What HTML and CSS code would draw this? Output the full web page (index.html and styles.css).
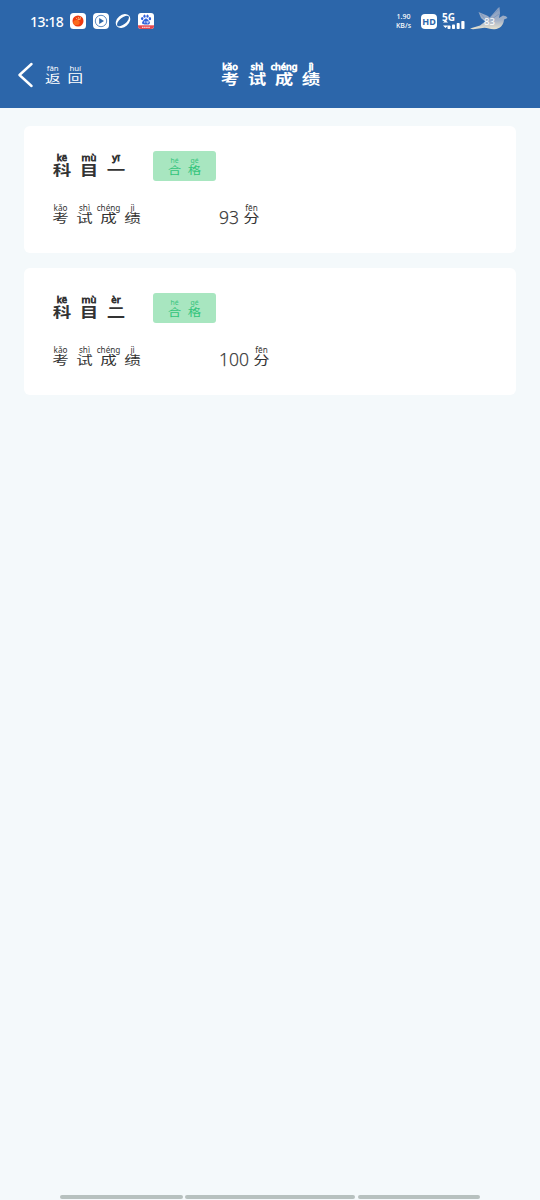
FILE: index.html
```html
<!DOCTYPE html>
<html lang="zh-CN">
<head>
<meta charset="utf-8">
<title>考试成绩</title>
<link rel="stylesheet" href="styles.css">
</head>
<body>
<header class="header">
  <div class="status">
    <span class="clock">13:18</span>
    <svg class="app" viewBox="0 0 16 16"><rect width="16" height="16" rx="3.5" fill="#fff"/><circle cx="8" cy="8" r="5.500" fill="#ee3a10"/><ellipse cx="6.500" cy="9.500" rx="3.200" ry="2.600" fill="#fb6a1c"/><path d="M6.200 4.800l.8 1.200M8.300 4l.3 1.600M10.500 4.200l-.5 1.700M7.500 6.800l3-.6" stroke="#ffd28a" stroke-width=".8"/></svg>
    <svg class="app" viewBox="0 0 16 16"><rect width="16" height="16" rx="4" fill="#fff"/><circle cx="8" cy="8" r="5.7" fill="none" stroke="#4b7dba" stroke-width=".9"/><path d="M6.2 5v6l4.8-3z" fill="#2d66aa"/></svg>
    <svg class="app" viewBox="0 0 16 16"><g transform="rotate(-40 8 8)"><ellipse cx="8" cy="8" rx="8" ry="6" fill="#fff"/><ellipse cx="8" cy="8" rx="7.300" ry="3.300" fill="#2c66aa"/></g></svg>
    <svg class="app" viewBox="0 0 16 16"><defs><clipPath id="tile"><rect width="16" height="16" rx="3"/></clipPath></defs><g clip-path="url(#tile)"><rect width="16" height="16" fill="#fff"/><g fill="#3162dc"><ellipse cx="4.200" cy="5.600" rx="1.200" ry="1.600"/><ellipse cx="6.500" cy="3.200" rx="1.100" ry="1.600"/><ellipse cx="9.500" cy="3.200" rx="1.100" ry="1.600"/><ellipse cx="11.900" cy="5.700" rx="1.200" ry="1.600"/><path d="M8 5.600c1.500 0 2 1.600 3.200 2.700 1.500 1.500.5 3.300-1.400 3.200H6.200c-2 0-2.800-1.800-1.400-3.200C6 7.200 6.500 5.600 8 5.600z"/></g><path d="M6.800 8v2.200M9 8v2h1.100V8" fill="none" stroke="#fff" stroke-width=".7"/><rect y="12.300" width="16" height="3.700" fill="#e5484f"/><path d="M4 14.200h8" stroke="#fff" stroke-width="1.100" stroke-dasharray="1.500 .6"/></g></svg>
    <span class="speed"><span>1.90</span><span>KB/s</span></span>
    <span class="hd">HD</span>
    <span class="signal"><span class="net">5G</span>
      <svg class="bars" viewBox="0 0 24 10"><path d="M1 2.500h5L3.500 0zM1 5.500h5L3.500 8z" fill="#fff"/><g fill="#fff"><rect x="5.500" y="5.500" width="3" height="3.500" rx=".8"/><rect x="10" y="4.500" width="3" height="4.500" rx=".8"/><rect x="14.700" y="3" width="3" height="6" rx=".8"/><rect x="19.300" y="1" width="3.200" height="8" rx=".8"/></g></svg>
    </span>
    <span class="battery">
      <svg viewBox="0 0 38 26"><defs><linearGradient id="dove" x1="0" y1="0" x2="0" y2="1"><stop offset="0" stop-color="#8099bf"/><stop offset=".6" stop-color="#a4b2c8"/><stop offset="1" stop-color="#e8e3cf"/></linearGradient></defs><path d="M0 22.500l10-3 5-4-4-3.500-2.500-6 8.500 3.500 3 2L28 2l1.500-1 .5 6-1 5 4-2.500 3 .8 1.500 1.700-3.500 1.500c0 5-4 9.500-9.500 9.800-4 .2-7-1.300-10-1.500L3 23.300z" fill="url(#dove)"/><path d="M19 12l9-8M15 13l-4-5M22 13l7-5" stroke="#6488bb" stroke-width=".5"/></svg>
      <span class="level">83</span>
    </span>
  </div>
  <nav class="nav">
    <a class="back">
      <svg class="chevron" viewBox="0 0 16 26"><path d="M13.500 2L1.500 13l12 11" fill="none" stroke="#fff" stroke-width="2.400" stroke-linecap="round" stroke-linejoin="round"/></svg>
      <span class="py py-back"><span class="zi"><i>fǎn</i><b>返</b></span><span class="zi"><i>huí</i><b>回</b></span></span>
    </a>
    <h1 class="py py-title"><span class="zi"><i>kǎo</i><b>考</b></span><span class="zi"><i>shì</i><b>试</b></span><span class="zi"><i>chéng</i><b>成</b></span><span class="zi"><i>jì</i><b>绩</b></span></h1>
  </nav>
</header>
<main class="list">
  <section class="card">
    <div class="card-head">
      <h2 class="py py-subject"><span class="zi"><i>kē</i><b>科</b></span><span class="zi"><i>mù</i><b>目</b></span><span class="zi"><i>yī</i><b>一</b></span></h2>
      <span class="badge py py-badge"><span class="zi"><i>hé</i><b>合</b></span><span class="zi"><i>gé</i><b>格</b></span></span>
    </div>
    <div class="row">
      <span class="label py py-text"><span class="zi"><i>kǎo</i><b>考</b></span><span class="zi"><i>shì</i><b>试</b></span><span class="zi"><i>chéng</i><b>成</b></span><span class="zi"><i>jì</i><b>绩</b></span></span>
      <span class="score">93</span>
      <span class="py py-text"><span class="zi"><i>fēn</i><b>分</b></span></span>
    </div>
  </section>
  <section class="card">
    <div class="card-head">
      <h2 class="py py-subject"><span class="zi"><i>kē</i><b>科</b></span><span class="zi"><i>mù</i><b>目</b></span><span class="zi"><i>èr</i><b>二</b></span></h2>
      <span class="badge py py-badge"><span class="zi"><i>hé</i><b>合</b></span><span class="zi"><i>gé</i><b>格</b></span></span>
    </div>
    <div class="row">
      <span class="label py py-text"><span class="zi"><i>kǎo</i><b>考</b></span><span class="zi"><i>shì</i><b>试</b></span><span class="zi"><i>chéng</i><b>成</b></span><span class="zi"><i>jì</i><b>绩</b></span></span>
      <span class="score">100</span>
      <span class="py py-text"><span class="zi"><i>fēn</i><b>分</b></span></span>
    </div>
  </section>
</main>
<footer class="gesture"><span></span><span class="mid"></span><span></span></footer>
</body>
</html>
```
FILE: styles.css
```css
* { box-sizing: border-box; }
body {
  margin: 0;
  height: 1200px;
  display: flex;
  flex-direction: column;
  overflow: hidden;
  background: #f4f9fb;
  color: #333;
  font-family: "Noto Sans", "Noto Sans CJK SC", sans-serif;
}
h1, h2 { margin: 0; }

/* annotated characters: pinyin over a flattened hanzi */
.py { display: flex; }
.zi {
  display: flex;
  flex-direction: column;
  align-items: center;
  width: var(--pitch);
}
.zi i {
  font-style: normal;
  font-size: var(--pin);
  line-height: var(--pin-h);
  height: var(--pin-h);
  white-space: nowrap;
}
.zi b {
  font-family: "Noto Sans CJK SC", sans-serif;
  font-weight: inherit;
  font-size: var(--han);
  line-height: var(--han-h);
  height: var(--han-h);
  transform: scaleY(.76);
}
.py-back { --pitch: 22.5px; --pin: 7.800px; --pin-h: 7px; --han: 15.500px; --han-h: 13px; font-weight: 400; }
.py-title, .py-subject { --pitch: 27px; --pin: 9.500px; --pin-h: 8px; --han: 18.500px; --han-h: 15px; font-weight: 700; }
.py-title i, .py-subject i { font-weight: 400; -webkit-text-stroke: .8px currentColor; }
.py-title { --pin: 9.200px; --han-h: 14px; }
.py-text { --pitch: 24px; --pin: 8.200px; --pin-h: 8px; --han: 16.500px; --han-h: 13px; }
.py-text b { transform: scaleY(.74); }
.py-badge { --pitch: 20px; --pin: 6.800px; --pin-h: 7px; --han: 13.500px; --han-h: 10px; }

.header { height: 108px; background: #2c66aa; color: #fff; }
.status { display: flex; align-items: center; height: 42px; padding-left: 30px; }
.clock { width: 40px; font-size: 14px; font-weight: 500; letter-spacing: -.5px; }
.app { width: 16px; height: 16px; margin-right: 6.500px; }
.speed {
  display: flex;
  flex-direction: column;
  align-items: center;
  width: 20px;
  margin-left: 233.500px;
  font-size: 7px;
  line-height: 9.500px;
  font-weight: 500;
}
.hd {
  width: 16px;
  height: 15px;
  margin-left: 7.500px;
  border-radius: 4px;
  background: #fff;
  color: #2c66aa;
  font: 700 9px/15px "Noto Sans", sans-serif;
  text-align: center;
}
.signal { display: flex; flex-direction: column; width: 24px; margin-left: 5px; }
.net { font-size: 10px; line-height: 8px; font-weight: 700; }
.bars { width: 24px; height: 10px; margin-top: -1px; }
.battery { position: relative; width: 38px; height: 26px; margin: -5px 0 0 4px; }
.battery svg { display: block; width: 38px; height: 26px; }
.level { position: absolute; left: 14px; top: 10px; font-size: 9.500px; line-height: 12px; }

.nav { position: relative; height: 66px; padding: 20px 0 0 18px; }
.back { display: flex; align-items: center; }
.chevron { width: 16px; height: 26px; margin-right: 7.500px; }
.nav h1 { position: absolute; left: 216.5px; top: 20.500px; }

.list { flex: 1; display: flex; flex-direction: column; gap: 15px; padding: 18px 24px 0; }
.card { height: 127px; padding: 25px 0 0 24.5px; border-radius: 6px; background: #fff; }
.card-head { display: flex; align-items: flex-start; height: 30px; }
.card-head h2 { width: 104.5px; padding-top: 3px; }
.badge {
  width: 63px;
  height: 30px;
  padding: 6px 11.5px 0;
  border-radius: 3px;
  background: #a8e6c0;
  color: #32c47b;
}
.row { display: flex; height: 20px; margin-top: 23px; }
.label { width: 170.500px; }
.score { margin-right: .5px; font: 300 17.500px/26px "Open Sans", "Noto Sans", sans-serif; -webkit-text-stroke: .25px currentColor; }

.gesture { display: flex; gap: 2.500px; height: 5px; padding: 0 60px; }
.gesture span { width: 122.5px; height: 3.500px; border-radius: 2px; background: #b7c1bf; }
.gesture .mid { width: 170px; }
```
